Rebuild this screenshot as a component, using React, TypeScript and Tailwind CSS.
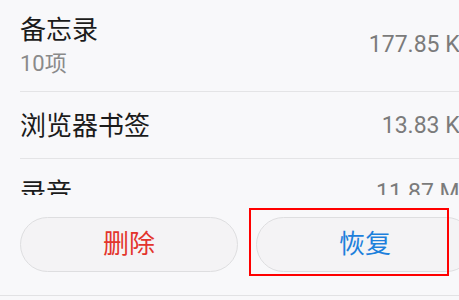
import React from 'react';

type Row = { title: string; sub?: string; size: string };

const rows: Row[] = [
  { title: '备忘录', sub: '10项', size: '177.85 KB' },
  { title: '浏览器书签', size: '13.83 KB' },
  { title: '录音', size: '11.87 MB' },
];

const font = { fontFamily: 'Roboto, "Noto Sans CJK SC", sans-serif' };

export default function App() {
  return (
    <div className="relative h-[300px] w-[459px] overflow-hidden bg-[#f8f8fa]" style={font}>
      <div className="flex h-full w-[494px] flex-col">
        <div className="h-[195px] overflow-hidden">
          {rows.map((row) => (
            <div key={row.title} className="pl-5">
              <div className={`flex items-center justify-between pr-5 ${row.sub ? 'h-[91px]' : 'h-[66px] pt-[3px]'}`}>
                <div className="flex flex-col">
                  <span className="text-[26px] leading-[31px] text-[#1b1b1b]">{row.title}</span>
                  {row.sub ? (
                    <span className="mt-[5px] text-[22px] leading-[26px] text-[#8a8a8a]">{row.sub}</span>
                  ) : null}
                </div>
                <span className="text-[23px] text-[#7b7b7b]">{row.size}</span>
              </div>
              <div className="h-px bg-[#e4e4e6]" />
            </div>
          ))}
        </div>
        <div className="flex flex-1 flex-col">
          <div className="flex gap-[18px] px-5 pt-[22px]">
            <button className="flex h-[55px] flex-1 items-center justify-center rounded-full border border-[#dedee0] bg-[#f4f3f5] text-[26px] text-[#e3342c]">
              删除
            </button>
            <button className="flex h-[55px] flex-1 items-center justify-center rounded-full border border-[#dedee0] bg-[#f4f3f5] text-[26px] text-[#1d80dc]">
              恢复
            </button>
          </div>
          <div className="mt-auto mb-[4px] h-px bg-[#e2e2e4]" />
        </div>
      </div>
      <div className="pointer-events-none absolute left-[249px] top-[208px] h-[68px] w-[200px] border-2 border-[#ff0000]" />
    </div>
  );
}
